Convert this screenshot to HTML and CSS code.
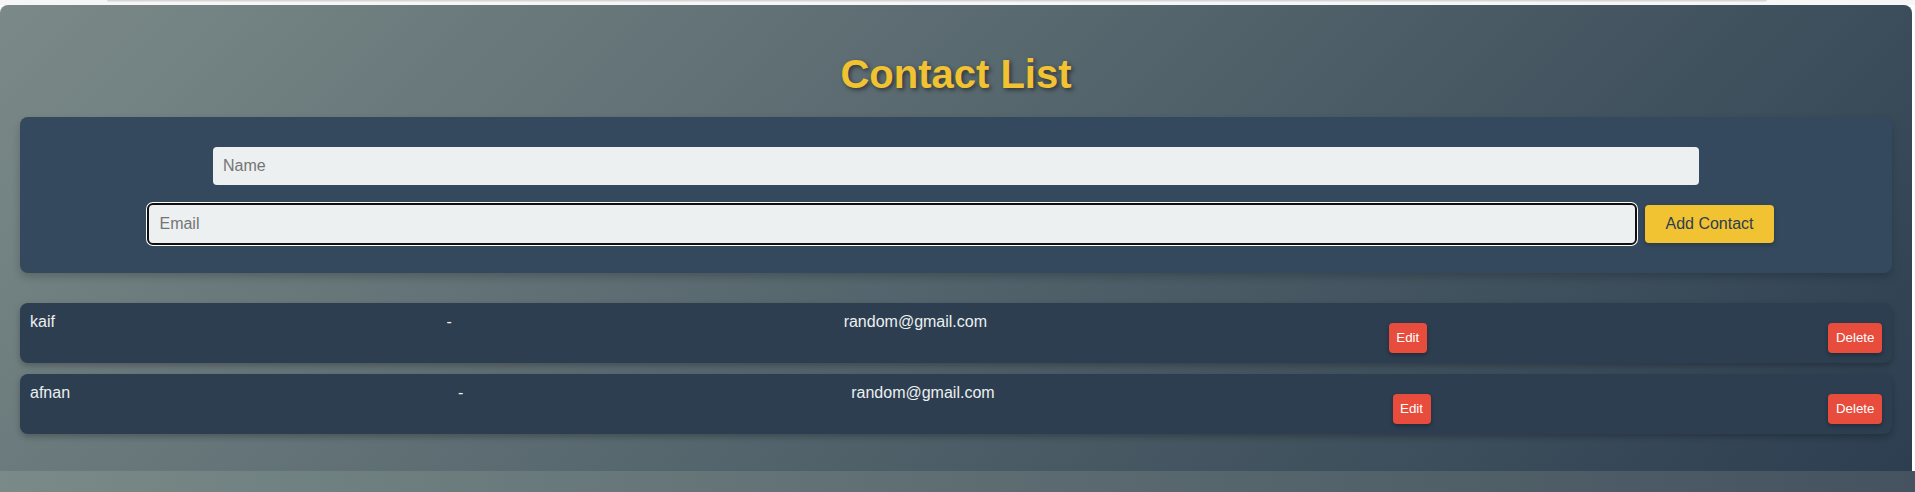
FILE: index.html
```html
<!DOCTYPE html>
<html lang="en">
<head>
<meta charset="utf-8">
<title>Contact List</title>
<link rel="stylesheet" href="styles.css">
</head>
<body>
<div class="topbar"><div class="topbar-edge"></div></div>
<div class="app">
  <h1 class="title">Contact List</h1>
  <form class="contact-form">
    <div class="form-row">
      <input class="field" type="text" placeholder="Name">
    </div>
    <div class="form-row form-row--offset">
      <input class="field field--focus" type="email" placeholder="Email">
      <button class="btn-add" type="button">Add Contact</button>
    </div>
  </form>
  <ul class="contact-list">
    <li class="contact">
      <span class="contact-text">kaif</span>
      <span class="contact-text">-</span>
      <span class="contact-text">random@gmail.com</span>
      <button class="btn-small" type="button">Edit</button>
      <button class="btn-small" type="button">Delete</button>
    </li>
    <li class="contact">
      <span class="contact-text">afnan</span>
      <span class="contact-text">-</span>
      <span class="contact-text">random@gmail.com</span>
      <button class="btn-small" type="button">Edit</button>
      <button class="btn-small" type="button">Delete</button>
    </li>
  </ul>
</div>
<div class="below"></div>
</body>
</html>
```

FILE: styles.css
```css
html, body {
  margin: 0;
  padding: 0;
}

body {
  background: #ffffff;
  font-family: "Liberation Sans", Arial, sans-serif;
  font-size: 16px;
  overflow: hidden;
}

.topbar {
  height: 5px;
  padding: 0 148px 0 107px;
  background: #f6f6f6;
}

.topbar-edge {
  height: 2px;
  background: linear-gradient(#cfcfcf, #ededed);
  border-radius: 0 0 3px 3px;
}

.app {
  margin-right: 3px;
  padding: 20px 20px 26px 20px;
  border-radius: 8px 8px 0 0;
  background: linear-gradient(135deg, #7b8a88 0%, #2c3e50 100%);
}

.title {
  margin: 26px 0 20px;
  font-size: 40px;
  line-height: 46px;
  font-weight: bold;
  text-align: center;
  color: #f1c232;
  text-shadow: 2px 2px 4px rgba(0, 0, 0, 0.5);
}

.contact-form {
  display: flex;
  flex-direction: column;
  gap: 20px;
  margin: 0 0 30px;
  padding: 30px 20px;
  background: #34495e;
  border-radius: 8px;
  box-shadow: 0 4px 8px rgba(0, 0, 0, 0.2);
}

.form-row {
  display: flex;
  justify-content: center;
  align-items: center;
}

.form-row--offset {
  padding-left: 11px;
}

.field {
  box-sizing: border-box;
  width: 1486px;
  height: 38px;
  padding: 0 10px;
  border: none;
  border-radius: 4px;
  background: #ecf0f1;
  font-family: "Liberation Sans", Arial, sans-serif;
  font-size: 16px;
  color: #2c3e50;
}

.field::placeholder {
  color: #757575;
}

.field--focus {
  outline: 2px solid #101010;
  outline-offset: 0;
  box-shadow: 0 0 0 3px #ffffff;
}

.btn-add {
  box-sizing: border-box;
  height: 38px;
  margin-left: 10px;
  padding: 0 20px;
  border: none;
  border-radius: 4px;
  background: #f1c232;
  color: #2c3e50;
  font-family: "Liberation Sans", Arial, sans-serif;
  font-size: 16px;
  box-shadow: 0 2px 4px rgba(0, 0, 0, 0.25);
}

.contact-list {
  margin: 0;
  padding: 0;
  list-style: none;
}

.contact {
  display: flex;
  justify-content: space-between;
  align-items: flex-start;
  margin-bottom: 11px;
  padding: 10px;
  background: #2c3e50;
  border-radius: 8px;
  box-shadow: 0 3px 6px rgba(0, 0, 0, 0.25);
}

.contact-text {
  color: #ecf0f1;
  font-size: 16px;
  line-height: 18px;
}

.btn-small {
  margin: 10px 0 0 10px;
  padding: 7px 7.5px;
  border: none;
  border-radius: 4px;
  background: #e74c3c;
  color: #ffffff;
  font-family: "Liberation Sans", Arial, sans-serif;
  font-size: 13.333px;
  line-height: 16px;
  box-shadow: 0 2px 4px rgba(0, 0, 0, 0.3);
}

.below {
  height: 21px;
  background: linear-gradient(90deg, #798a88 0%, #5d6d72 50%, #44535f 100%);
}
```
